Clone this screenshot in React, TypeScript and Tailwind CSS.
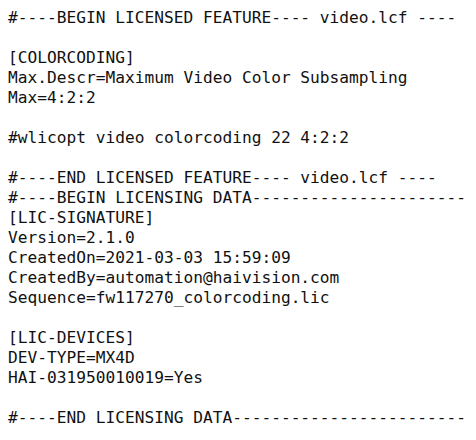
const lines = [
  "#----BEGIN LICENSED FEATURE---- video.lcf ----",
  "",
  "[COLORCODING]",
  "Max.Descr=Maximum Video Color Subsampling",
  "Max=4:2:2",
  "",
  "#wlicopt video colorcoding 22 4:2:2",
  "",
  "#----END LICENSED FEATURE---- video.lcf ----",
  "#----BEGIN LICENSING DATA----------------------",
  "[LIC-SIGNATURE]",
  "Version=2.1.0",
  "CreatedOn=2021-03-03 15:59:09",
  "CreatedBy=automation@haivision.com",
  "Sequence=fw117270_colorcoding.lic",
  "",
  "[LIC-DEVICES]",
  "DEV-TYPE=MX4D",
  "HAI-031950010019=Yes",
  "",
  "#----END LICENSING DATA------------------------",
];

export default function App() {
  return (
    <div className="h-[440px] w-[476px] overflow-hidden bg-white pl-2 pt-2">
      <pre className="whitespace-pre font-['DejaVu_Sans_Mono',monospace] text-[16.2px] leading-[20px] text-[#111]">
        {lines.map((line, i) => (
          <div key={i} className="h-5">
            {line}
          </div>
        ))}
      </pre>
    </div>
  );
}
